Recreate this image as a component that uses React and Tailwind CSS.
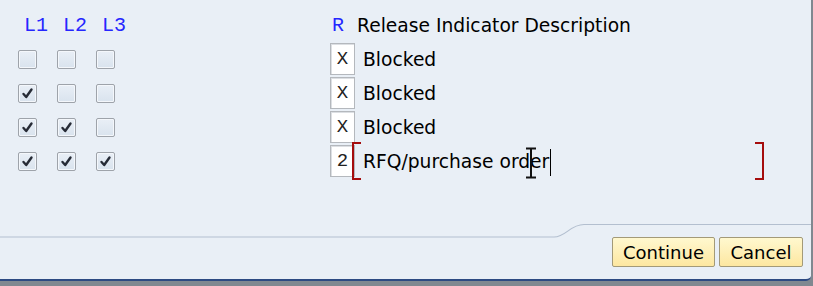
const ui = { fontFamily: '"DejaVu Sans", "Liberation Sans", sans-serif' };
const mono = { fontFamily: '"Liberation Mono", "DejaVu Sans Mono", monospace' };

const rows = [
  { levels: [false, false, false], code: 'X', text: 'Blocked' },
  { levels: [true, false, false], code: 'X', text: 'Blocked' },
  { levels: [true, true, false], code: 'X', text: 'Blocked' },
  { levels: [true, true, true], code: '2', text: 'RFQ/purchase order', active: true },
];

function Check({ on }) {
  return (
    <div className="w-[19px] h-[19px] rounded-[2px] border border-[#9ea3aa] bg-gradient-to-b from-[#e9eff6] to-[#d9e3ee] flex items-center justify-center shadow-[inset_0_0_0_1px_#f4f7fb]">
      {on && (
        <svg width="13" height="13" viewBox="0 0 13 13">
          <path d="M2.5 7 L5.2 10 L10.5 2.5" fill="none" stroke="#262b36" strokeWidth="2.4" strokeLinecap="round" strokeLinejoin="round" />
        </svg>
      )}
    </div>
  );
}

function Bracket() {
  return (
    <>
      <svg className="absolute left-[-11px] top-[-2px]" width="10" height="38" viewBox="0 0 10 38">
        <path d="M9 1 H1 V37 H9" fill="none" stroke="#a50d0d" strokeWidth="2" />
      </svg>
      <svg className="absolute left-[391px] top-[-2px]" width="10" height="38" viewBox="0 0 10 38">
        <path d="M1 1 H9 V37 H1" fill="none" stroke="#a50d0d" strokeWidth="2" />
      </svg>
    </>
  );
}

export default function App() {
  return (
    <div className="w-[813px] h-[286px] bg-[#808890] overflow-hidden">
      <div className="w-[811px] h-[281px] bg-[#e9eff6] border-b-2 border-[#2d4a82] rounded-br-[5px] flex flex-col">
        <div className="flex pt-[8px]">
          {/* level checkboxes */}
          <div className="pl-[18px] w-[330px]">
            <div className="flex h-[34px] items-center pt-[2px] text-[20px] text-[#2626ff]" style={mono}>
              {['L1', 'L2', 'L3'].map((l) => (
                <div key={l} className="w-[39px] pl-[6px]">{l}</div>
              ))}
            </div>
            {rows.map((r, i) => (
              <div key={i} className="flex h-[34px] items-center">
                {r.levels.map((on, j) => (
                  <div key={j} className="w-[39px]"><Check on={on} /></div>
                ))}
              </div>
            ))}
          </div>

          {/* release indicators */}
          <div>
            <div className="flex h-[34px] items-center pt-[2px]">
              <div className="w-[27px] pl-[2px] text-[20px] text-[#2626ff]" style={mono}>R</div>
              <div className="text-[18.7px] text-black" style={ui}>Release Indicator Description</div>
            </div>
            {rows.map((r, i) => (
              <div key={i} className="flex h-[34px] items-center">
                <div className="w-[25px] h-[32px] bg-white border border-[#b4b8bd] shadow-[inset_1px_1px_0_#dcdfe3] flex items-center justify-center text-[19px] text-[#222]" style={mono}>
                  {r.code}
                </div>
                <div className="relative ml-[8px] h-[34px] pt-[2px] flex items-center text-[18.7px] text-black" style={ui}>
                  {r.text}
                  {r.active && <span className="inline-block w-px h-[27px] bg-black ml-[1px]" />}
                  {r.active && <Bracket />}
                  {r.active && (
                    <svg className="absolute left-[161px] top-[3px]" width="14" height="32" viewBox="0 0 14 32">
                      <path d="M2 1.5 H12 M7 1.5 V30.5 M2 30.5 H12" fill="none" stroke="#111" strokeWidth="2" />
                    </svg>
                  )}
                </div>
              </div>
            ))}
          </div>
        </div>

        <div className="mt-auto">
          <svg className="block" width="811" height="15" viewBox="0 0 811 15">
            <path d="M0 14 H554 C566 14 570 1.5 584 1.5 H811" fill="none" stroke="#b3bfcf" strokeWidth="1.2" />
          </svg>
          <div className="flex justify-end gap-[4px] pr-[8px] mt-[-1px] pb-[12px]">
            <button className="h-[30px] w-[103px] rounded-[2px] border border-[#a39a78] bg-gradient-to-b from-[#fff8cf] to-[#fde7a0] text-[18px] text-black" style={ui}>Continue</button>
            <button className="h-[30px] w-[84px] rounded-[2px] border border-[#a39a78] bg-gradient-to-b from-[#fff8cf] to-[#fde7a0] text-[18px] text-black" style={ui}>Cancel</button>
          </div>
        </div>
      </div>
    </div>
  );
}
